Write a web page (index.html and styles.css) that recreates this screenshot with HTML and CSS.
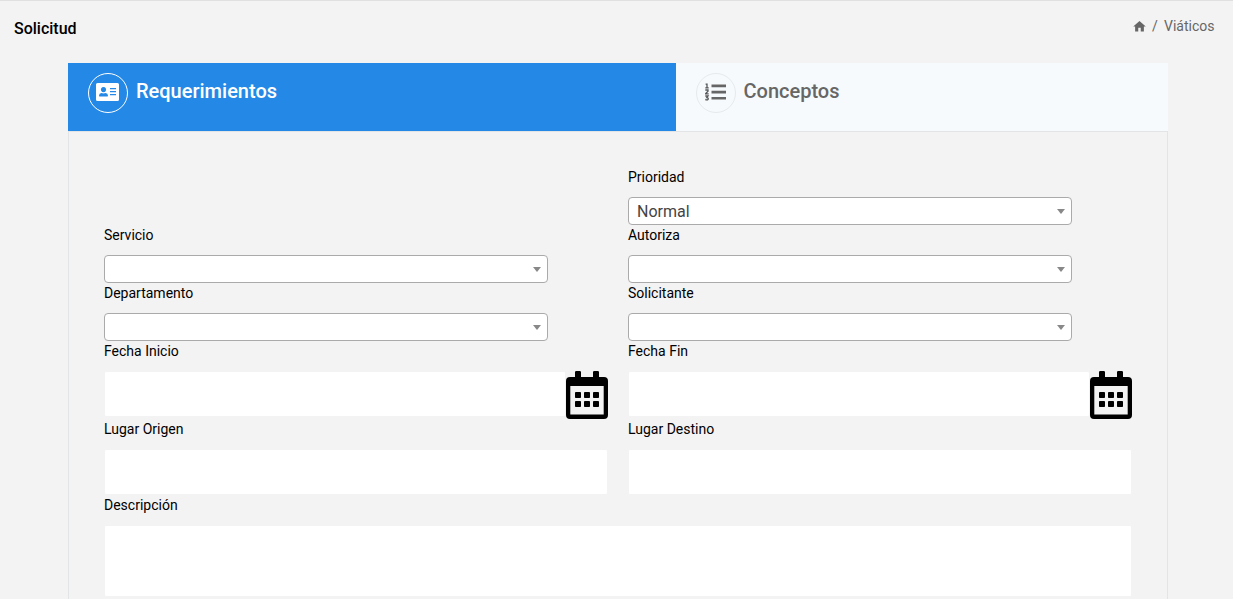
FILE: index.html
```html
<!DOCTYPE html>
<html lang="es">
<head>
<meta charset="utf-8">
<title>Solicitud</title>
<link rel="stylesheet" href="styles.css">
</head>
<body>
<svg class="sprite" aria-hidden="true">
  <symbol id="calendar" viewBox="0 0 42 48">
    <path fill-rule="evenodd" d="M4 6H9V1.200Q9 0 10.200 0H13.800Q15 0 15 1.200V6H27V1.200Q27 0 28.200 0H31.800Q33 0 33 1.200V6H38Q42 6 42 10V44Q42 48 38 48H4Q0 48 0 44V10Q0 6 4 6ZM4.300 15V43.500H37.700V15Z"/>
    <rect x="9" y="21" width="6" height="6" rx=".8"/><rect x="18" y="21" width="6" height="6" rx=".8"/><rect x="27" y="21" width="6" height="6" rx=".8"/>
    <rect x="9" y="30" width="6" height="6" rx=".8"/><rect x="18" y="30" width="6" height="6" rx=".8"/><rect x="27" y="30" width="6" height="6" rx=".8"/>
  </symbol>
</svg>
<header class="topbar">
  <h1 class="title">Solicitud</h1>
  <nav class="breadcrumb">
    <svg class="home" viewBox="0 0 24 24"><path d="M10 20v-6h4v6h5v-8h3L12 3 2 12h3v8z"/></svg>
    <span class="slash">/</span>
    <span>Viáticos</span>
  </nav>
</header>
<main class="wizard">
  <div class="tabs">
    <div class="tab tab-active">
      <span class="tab-icon">
        <svg width="23" height="18" viewBox="0 0 23 18"><path fill="#fff" fill-rule="evenodd" d="M1.500 0H21.500Q23 0 23 1.500V16.500Q23 18 21.500 18H1.500Q0 18 0 16.500V1.500Q0 0 1.500 0ZM7.500 4a2.600 2.600 0 1 0 .01 0ZM3 12.800Q3 10.300 5.500 10.100Q7.500 10.900 9.500 10.100Q12 10.300 12 12.800Q12 13.500 11.400 13.500H3.600Q3 13.500 3 12.800ZM14 5v1.200h6V5ZM14 8v1.200h6V8ZM14 11v1.200h6V11Z"/></svg>
      </span>
      <span class="tab-text">Requerimientos</span>
    </div>
    <div class="tab">
      <span class="tab-icon">
        <svg width="21" height="18" viewBox="0 0 21 18"><path fill="#666" d="M6.500 1.500h14.500v2.700H6.500zM6.500 7.700h14.500v2.700H6.500zM6.500 13.900h14.500v2.700H6.500z"/><path fill="none" stroke="#555" stroke-width="1.300" d="M.6 1.100h1.400v3.700M.3 4.900h3.400M.3 7h2.700v1.200L.7 10.500v.3h3M.3 13h2.700l-1.200 1.600q1.500 0 1.500 1.200 0 1.500-3 .9"/></svg>
      </span>
      <span class="tab-text">Conceptos</span>
    </div>
  </div>
  <form class="panel">
    <div class="field field-right"><label>Prioridad</label><div class="select">Normal</div></div>
    <div class="field"><label>Servicio</label><div class="select"></div></div>
    <div class="field"><label>Autoriza</label><div class="select"></div></div>
    <div class="field"><label>Departamento</label><div class="select"></div></div>
    <div class="field"><label>Solicitante</label><div class="select"></div></div>
    <div class="field"><label>Fecha Inicio</label><div class="date"><input class="input" type="text"><svg class="calendar"><use href="#calendar"/></svg></div></div>
    <div class="field"><label>Fecha Fin</label><div class="date"><input class="input" type="text"><svg class="calendar"><use href="#calendar"/></svg></div></div>
    <div class="field"><label>Lugar Origen</label><input class="input" type="text"></div>
    <div class="field"><label>Lugar Destino</label><input class="input" type="text"></div>
    <div class="field field-wide"><label>Descripción</label><textarea class="input textarea"></textarea></div>
  </form>
</main>
</body>
</html>
```
FILE: styles.css
```css
* { box-sizing: border-box; }
html { height: 100%; overflow: hidden; }
body {
  display: flex;
  flex-direction: column;
  margin: 0;
  height: 100%;
  overflow: hidden;
  background: #f3f3f3;
  border-top: 1px solid #e0e0e0;
  color: #000;
  font: 14px/20px Roboto, sans-serif;
}
.sprite { display: none; }
.topbar {
  display: flex;
  flex: none;
  justify-content: space-between;
  height: 62px;
  padding: 15px 18.5px 0 14px;
}
.title { margin: 0; font-size: 16px; line-height: 26px; font-weight: 500; }
.breadcrumb { display: flex; height: 20px; color: #666; }
.home { width: 15px; height: 15px; margin: 3px 5px 0 0; fill: #666; }
.slash { width: 12px; }
.wizard {
  display: flex;
  flex: 1;
  flex-direction: column;
  min-height: 0;
  width: 1100px;
  margin-left: 68px;
}
.tabs { display: grid; flex: none; grid-template-columns: 608px 492px; height: 68px; }
.tab {
  display: flex;
  gap: 7.5px;
  padding: 10px 20px 0;
  background: #f6fafd;
  color: #666;
}
.tab-active { gap: 8px; background: #2489e6; color: #fff; }
.tab-icon {
  display: flex;
  align-items: center;
  justify-content: center;
  width: 40px;
  height: 40px;
  padding: 0 1px 2px 0;
  border: 1px solid #e6eaed;
  border-radius: 50%;
}
.tab-active .tab-icon { border-color: #fff; }
.tab-text { font-size: 20px; line-height: 36px; font-weight: 500; }
.panel {
  display: grid;
  flex: 1;
  grid-template-columns: 504px 504px;
  column-gap: 20px;
  align-content: start;
  min-height: 0;
  padding: 35px 35px 0;
  border: 1px solid #e2e4e6;
  border-bottom: 0;
}
.field { display: flex; flex-direction: column; }
.field-right { grid-column: 2; }
.field-wide { grid-column: 1 / -1; }
.field label { height: 20px; margin-bottom: 10px; }
.select {
  display: flex;
  align-items: center;
  width: 444px;
  height: 28px;
  padding: 2px 6px 0 8px;
  background: #fff;
  border: 1px solid #aaa;
  border-radius: 4px;
  color: #444;
  font-size: 16px;
  line-height: 24px;
}
.select::after {
  content: "";
  margin: 0 0 2px auto;
  border: 4px solid transparent;
  border-top: 5px solid #888;
  border-bottom: 0;
}
.input {
  width: 100%;
  height: 46px;
  padding: 0 10px;
  background: #fff;
  border: 1px solid #f3f3f3;
  border-radius: 2px;
  outline: 0;
}
.date { display: flex; height: 48px; }
.date .input { width: 462px; }
.calendar { width: 42px; height: 48px; }
.textarea { height: 72px; resize: none; }
```
